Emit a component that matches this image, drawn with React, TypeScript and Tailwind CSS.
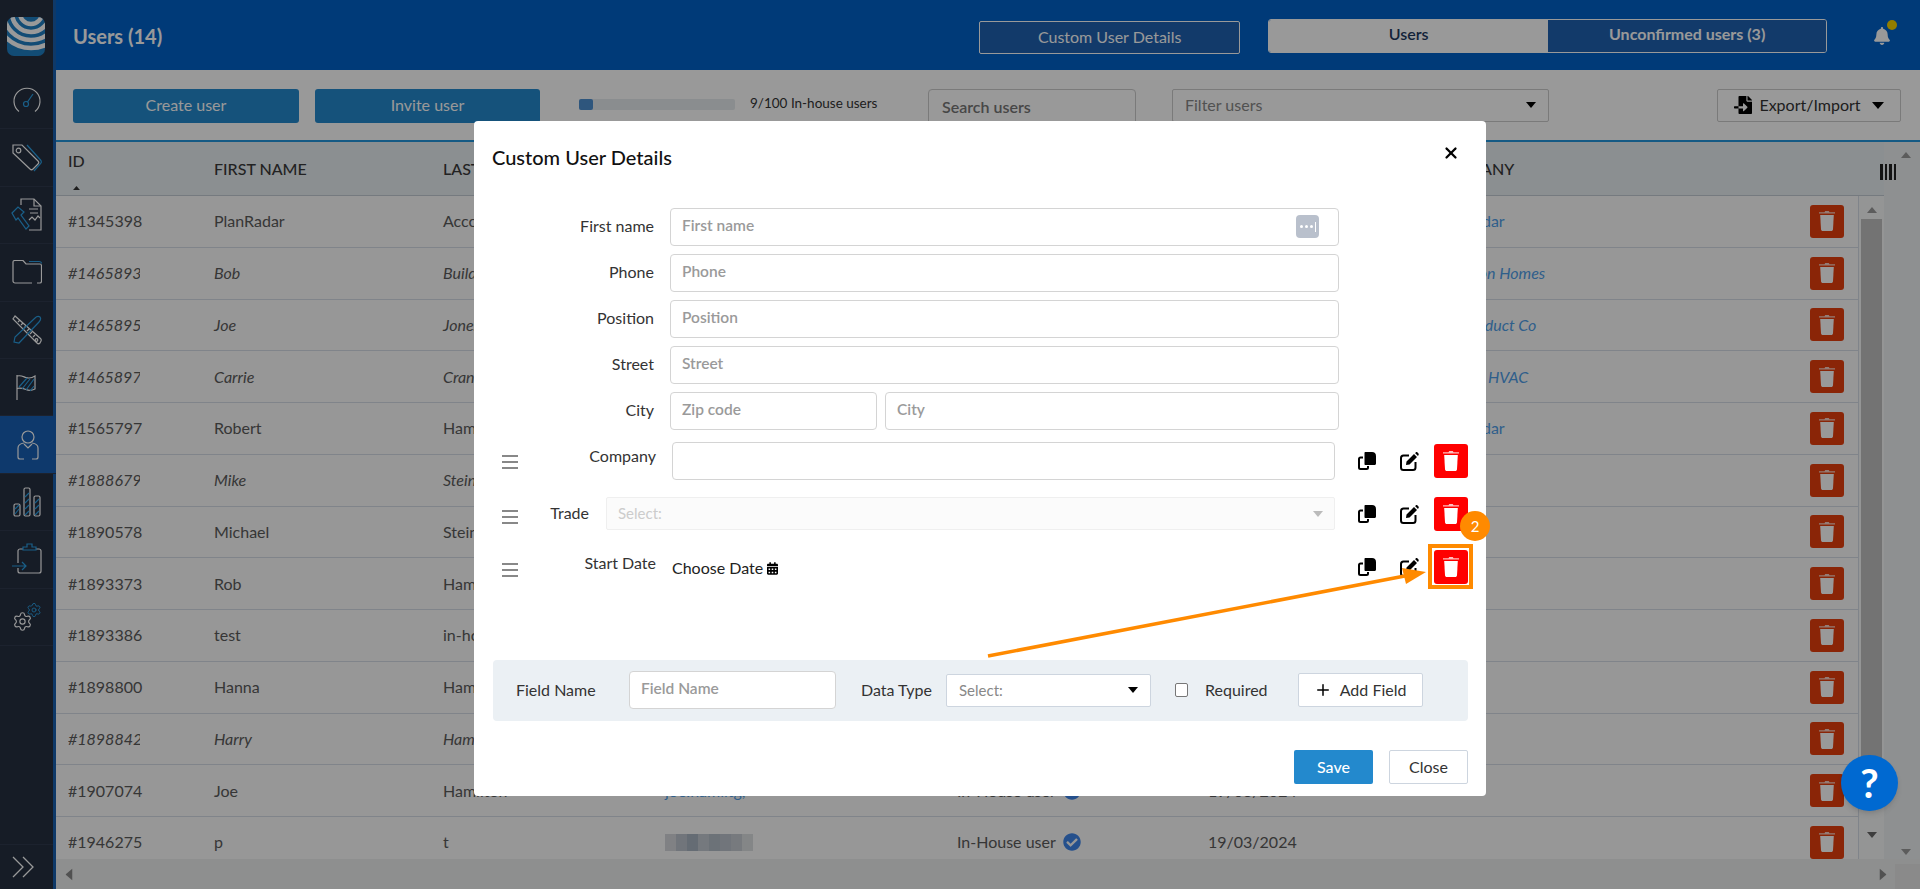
import { FC, ReactNode } from 'react';
import { Settings, Plus, X } from 'lucide-react';
import { FaBell, FaCalendarAlt, FaCheckCircle, FaFileImport } from 'react-icons/fa';

const users = [
  { id: '#1345398', first: 'PlanRadar', last: 'Accounts', company: 'PlanRadar', italic: false },
  { id: '#1465893', first: 'Bob', last: 'Builder', company: 'Hamilton Homes', italic: true },
  { id: '#1465895', first: 'Joe', last: 'Jones', company: 'Ace Product Co', italic: true },
  { id: '#1465897', first: 'Carrie', last: 'Crane', company: 'Cranely HVAC', italic: true },
  { id: '#1565797', first: 'Robert', last: 'Hamilton', company: 'PlanRadar', italic: false },
  { id: '#1888679', first: 'Mike', last: 'Stein', company: '', italic: true },
  { id: '#1890578', first: 'Michael', last: 'Stein', company: '', italic: false },
  { id: '#1893373', first: 'Rob', last: 'Hamilton', company: '', italic: false },
  { id: '#1893386', first: 'test', last: 'in-house', company: '', italic: false },
  { id: '#1898800', first: 'Hanna', last: 'Hamilton', company: '', italic: false },
  { id: '#1898842', first: 'Harry', last: 'Hamilton', company: '', italic: true },
  { id: '#1907074', first: 'Joe', last: 'Hamilton', company: '', italic: false },
  { id: '#1946275', first: 'p', last: 't', company: '', italic: false },
];

const blurCells = ['bg-[#d5d8dc]', 'bg-[#bcc4ce]', 'bg-[#a9b4c2]', 'bg-[#c4cad2]', 'bg-[#b5bec9]', 'bg-[#bcc4ce]', 'bg-[#c7ccd3]', 'bg-[#dcdfe2]'];

const Trash: FC = () => (
  <svg width="16" height="20" viewBox="0 0 16 20" fill="white">
    <path d="M5.5 1.2 6.2 0h3.6l.7 1.2H16v1.3H0V1.2z" opacity="0.75" />
    <path d="M1.2 4h13.6l-.8 14.2c-.1 1-.8 1.800-1.800 1.800H3.800c-1 0-1.700-.8-1.800-1.800z" />
  </svg>
);

const CopyIcon: FC = () => (
  <svg width="18" height="18" viewBox="0 0 18 18" fill="none">
    <path d="M5 5.500H2.500C1.600 5.500 1 6.100 1 7v8.500C1 16.400 1.600 17 2.500 17h6c.9 0 1.500-.6 1.500-1.500V14" stroke="black" strokeWidth="2" />
    <path d="M7.500 0H14c2.500 0 4 1.600 4 4v7.500c0 .9-.6 1.500-1.500 1.500h-9c-.6 0-1-.4-1-1V1c0-.6.4-1 1-1z" fill="black" />
  </svg>
);

const EditIcon: FC = () => (
  <svg width="19" height="19" viewBox="0 0 19 19" fill="none">
    <path d="M9 3.500H3.500C2.100 3.500 1 4.600 1 6v9.500C1 16.900 2.100 18 3.500 18H13c1.400 0 2.500-1.100 2.500-2.500V10" stroke="black" strokeWidth="2" />
    <path d="M6.500 9.500 14 2l3 3-7.500 7.500-3.500.5zM15 1l.8-.6c.5-.4 1.200-.4 1.700 0l1 1c.4.500.4 1.200 0 1.700L18 4z" fill="black" />
  </svg>
);

const Caret: FC<{ className?: string; color?: string; size?: 'sm' | 'lg' }> = ({ className, color = 'black', size = 'sm' }) => (
  <svg width={size === 'sm' ? 10 : 12} height={size === 'sm' ? 6 : 7} viewBox="0 0 12 7" className={className}>
    <path d="M0 0h12L6 7z" fill={color} />
  </svg>
);

const Logo: FC = () => (
  <svg width="38" height="39" viewBox="0 0 38 39">
    <defs>
      <clipPath id="logo-clip">
        <rect width="38" height="39" rx="7" />
      </clipPath>
    </defs>
    <g clipPath="url(#logo-clip)">
      <rect width="38" height="39" fill="#1f7fc4" />
      <g fill="none" stroke="white" strokeWidth="4.500">
        <circle cx="24" cy="-4" r="11" />
        <circle cx="24" cy="-4" r="19" />
        <circle cx="24" cy="-4" r="27" />
        <circle cx="24" cy="-4" r="35" />
      </g>
    </g>
  </svg>
);

const navIcons: ReactNode[] = [
  <svg key="gauge" width="30" height="28" viewBox="0 0 30 28" fill="none" stroke="white" strokeWidth="1.2">
    <path d="M7 25.500A13 13 0 1 1 23 25.500" />
    <circle cx="14" cy="18" r="2.500" stroke="#2b9fe4" />
    <path d="M15.500 16 21 8" stroke="#2b9fe4" />
  </svg>,
  <svg key="tag" width="30" height="28" viewBox="0 0 30 28" fill="none" stroke="white" strokeWidth="1.2">
    <path d="M1 1h9l16 16c1 1 1 2 0 3l-5 5c-1 1-2 1-3 0L1 9z" />
    <circle cx="6.500" cy="6.500" r="2.300" />
    <path d="M15 1 28.500 16c1.200 1.400 1 2.600 0 3.600L22 27" stroke="#2b9fe4" />
  </svg>,
  <svg key="doc" width="32" height="33" viewBox="0 0 32 33" fill="none" stroke="white" strokeWidth="1.2">
    <path d="M10 7V1h13l7 7v24H18" />
    <path d="M23 1v7h7M18 11h9M19 15h8" />
    <path d="M18 22l3-3 3 3 3-4 2 2" />
    <path d="M1 15l6-6 6 5-3 3 8 11-3 3-8-11-2 2z" stroke="#2b9fe4" />
  </svg>,
  <svg key="folder" width="30" height="24" viewBox="0 0 30 24" fill="none" stroke="white" strokeWidth="1.2">
    <path d="M20 23H3c-1 0-2-1-2-2V2c0-1 1-1.500 2-1.500h8l3 3.500h14c1 0 1.500 1 1.500 2v15c0 1-.5 2-1.500 2h-3" />
    <path d="M17 1.500h10c1.500 0 2.500 1 2.500 2" stroke="#2b9fe4" />
  </svg>,
  <svg key="ruler" width="30" height="30" viewBox="0 0 30 30" fill="none" stroke="white" strokeWidth="1.2">
    <path d="M3 1 1 4l24 24c1 1 2 1 3 0l1-2c.5-1 .5-1.500-.5-2.500z" />
    <path d="M6 7l2-2M9 10l2-2M12 13l2-2M15 16l2-2M18 19l2-2M21 22l2-2" />
    <circle cx="24.500" cy="25" r="1.300" />
    <path d="M2 27l1-5L23 3c1.500-1.500 3.500-2 5-1 1 1.500.5 3.500-1 5L7 28z" stroke="#2b9fe4" />
  </svg>,
  <svg key="flag" width="24" height="28" viewBox="0 0 24 28" fill="none" stroke="white" strokeWidth="1.2">
    <path d="M2 2v25" />
    <path d="M2 3c4-1 6 .5 9 1.500 3 1 6 .5 9-1.500v13c-3 1.500-6 2-9 .5-3-1-6-2-9-1" />
    <path d="M4 14 12 5M7 16l8-10M11 17l8-11M15 18l4-5" stroke="#2b9fe4" />
  </svg>,
  <svg key="user" width="22" height="30" viewBox="0 0 22 30" fill="none" stroke="white" strokeWidth="1.2">
    <circle cx="11" cy="7" r="6" />
    <path d="M7 13c-3 .5-6 2-6 5v9c0 1 1 2 2 2h4M15 13c3 .5 6 2 6 5v9c0 1-1 2-2 2h-4M7 14l4 4 4-4" />
  </svg>,
  <svg key="bars" width="30" height="30" viewBox="0 0 30 30" fill="none" stroke="white" strokeWidth="1.2">
    <rect x="2" y="17" width="6" height="12" rx="1.500" />
    <rect x="12" y="1" width="6" height="28" rx="1.500" />
    <rect x="22" y="9" width="6" height="20" rx="1.500" />
    <path d="M3 27l4-5M3 22l4-4M13 10l4-4M13 16l4-4M13 22l4-4M13 28l4-4M23 16l4-4M23 22l4-4M23 28l4-4" stroke="#2b9fe4" />
  </svg>,
  <svg key="clip" width="30" height="32" viewBox="0 0 30 32" fill="none" stroke="white" strokeWidth="1.2">
    <path d="M11 6H8c-1 0-2 1-2 2v12M6 25v3c0 1 1 2 2 2h19c1 0 2-1 2-2V8c0-1-1-2-2-2h-3" />
    <path d="M11 7V4h4V1h5v3h4v3z" stroke="#2b9fe4" />
    <path d="M0 23h14M10 19l4 4-4 4" stroke="#2b9fe4" />
  </svg>,
];

const Handle: FC = () => (
  <div className="flex w-[18px] flex-col gap-[4px] pt-[13px]">
    <div className="h-[2px] w-[16px] bg-[#888]"></div>
    <div className="h-[2px] w-[16px] bg-[#888]"></div>
    <div className="h-[2px] w-[16px] bg-[#888]"></div>
  </div>
);

const Actions: FC<{ top: string }> = ({ top }) => (
  <div className={`ml-[23px] flex ${top}`}>
    <div className="mt-[8px]"><CopyIcon /></div>
    <div className="ml-[24px] mt-[8px]"><EditIcon /></div>
    <button className="ml-[15px] flex h-[34px] w-[34px] items-center justify-center rounded-[3px] bg-[#ff0000]">
      <Trash />
    </button>
  </div>
);

const TextField: FC<{ placeholder: string; className?: string }> = ({ placeholder, className = 'w-[669px]' }) => (
  <input
    placeholder={placeholder}
    className={`${className} h-[38px] rounded-[4px] border border-[#d4d4d4] bg-white px-[11px] pb-[4px] text-[15.5px] font-semibold text-[#333] placeholder:text-[#9a9a9a]`}
  />
);

const FormRow: FC<{ label: string; children: ReactNode }> = ({ label, children }) => (
  <div className="flex h-[38px] items-center">
    <label className="w-[180px] pb-[2px] text-right text-[16px] text-[#333]">{label}</label>
    <div className="ml-[16px] flex gap-[8px]">{children}</div>
  </div>
);

const UserModal: FC = () => (
  <div className="absolute left-[474px] top-[121px] z-20 h-[675px] w-[1012px] rounded-[4px] bg-white font-['Lato',sans-serif]">
    <div className="flex h-[87px] items-start justify-between pl-[18px] pr-[26px] pt-[23px]">
      <h2 className="text-[20px] font-medium leading-[26px] text-[#111]">Custom User Details</h2>
      <X className="h-[18px] w-[18px] text-black" strokeWidth={3} />
    </div>

    <div className="flex flex-col gap-[8px]">
      <FormRow label="First name">
        <div className="relative">
          <TextField placeholder="First name" />
          <div className="absolute right-[20px] top-[7px] flex h-[23px] w-[23px] items-center justify-center gap-[2px] rounded-[4px] bg-[#b9c0cc]">
            <span className="h-[3px] w-[3px] rounded-full bg-white"></span>
            <span className="h-[3px] w-[3px] rounded-full bg-white"></span>
            <span className="h-[3px] w-[3px] rounded-full bg-white"></span>
            <span className="h-[10px] w-[1px] bg-white"></span>
          </div>
        </div>
      </FormRow>
      <FormRow label="Phone"><TextField placeholder="Phone" /></FormRow>
      <FormRow label="Position"><TextField placeholder="Position" /></FormRow>
      <FormRow label="Street"><TextField placeholder="Street" /></FormRow>
      <FormRow label="City">
        <TextField placeholder="Zip code" className="w-[207px]" />
        <TextField placeholder="City" className="w-[454px]" />
      </FormRow>
    </div>

    <div className="ml-[28px] mt-[12px] flex h-[38px]">
      <Handle />
      <div className="w-[136px] pt-[3px] text-right text-[16px] leading-[22px] text-[#333]">Company</div>
      <input className="ml-[16px] h-[38px] w-[663px] rounded-[4px] border border-[#d4d4d4] bg-white" />
      <Actions top="mt-[2px]" />
    </div>

    <div className="ml-[28px] mt-[17px] flex h-[33px]">
      <Handle />
      <div className="w-[69px] pt-[5px] text-right text-[16px] leading-[22px] text-[#333]">Trade</div>
      <div className="ml-[17px] flex h-[33px] w-[729px] items-center justify-between rounded-[2px] border border-[#efefef] bg-[#fbfbfb] pl-[11px] pr-[11px]">
        <span className="text-[15px] text-[#ccc]">Select:</span>
        <Caret color="#bbb" />
      </div>
      <Actions top="mt-0" />
    </div>

    <div className="ml-[28px] mt-[20px] flex h-[33px]">
      <Handle />
      <div className="w-[136px] pt-[2px] text-right text-[16px] leading-[22px] text-[#333]">Start Date</div>
      <div className="ml-[16px] flex h-[22px] w-[663px] items-center gap-[4px] pt-[14px] text-[16px] text-[#222]">
        Choose Date <FaCalendarAlt className="h-[13px] w-[11px] text-black" />
      </div>
      <Actions top="mt-0" />
    </div>

    <div className="ml-[19px] mt-[77px] flex h-[61px] w-[975px] items-center rounded-[4px] bg-[#ebf0f4] pb-[1px] pl-[23px] text-[16px] text-[#333]">
      <span className="w-[113px]">Field Name</span>
      <TextField placeholder="Field Name" className="w-[207px]" />
      <span className="ml-[25px] w-[85px]">Data Type</span>
      <div className="flex h-[33px] w-[205px] items-center justify-between rounded-[2px] border border-[#cdd5df] bg-white pl-[12px] pr-[12px]">
        <span className="text-[15px] text-[#888]">Select:</span>
        <Caret />
      </div>
      <span className="ml-[24px] h-[14px] w-[13px] rounded-[2px] border border-[#777] bg-white"></span>
      <span className="ml-[17px]">Required</span>
      <button className="ml-[30px] flex h-[34px] w-[125px] items-center justify-center gap-[8px] rounded-[2px] border border-[#cdd5df] bg-white text-[16px] text-[#333]">
        <Plus className="h-[18px] w-[18px] text-black" strokeWidth={2} /> Add Field
      </button>
    </div>

    <div className="mt-[29px] flex justify-end gap-[16px] pr-[18px]">
      <button className="h-[34px] w-[79px] rounded-[2px] bg-[#2389cd] text-[16px] font-medium text-white">Save</button>
      <button className="h-[34px] w-[79px] rounded-[2px] border border-[#cdd5df] bg-white text-[16px] text-[#333]">Close</button>
    </div>

    {/* annotation drawn on top of the screenshot */}
    <div className="absolute left-[954px] top-[423px] h-[45px] w-[45px] border-[4px] border-[#ff8a00]"></div>
    <div className="absolute left-[986px] top-[390px] flex h-[30px] w-[30px] items-center justify-center rounded-full bg-[#ff8a00] text-[15px] text-white">2</div>
    <svg className="pointer-events-none absolute left-[500px] top-[430px]" width="460" height="115" viewBox="0 0 460 115">
      <path d="M14 105 436 24" stroke="#ff8a00" strokeWidth="3.500" fill="none" />
      <path d="M452 21 428 17 432 33z" fill="#ff8a00" />
    </svg>
  </div>
);

const App: FC = () => {
  return (
    <div className="relative flex h-screen w-full overflow-hidden bg-white font-['Lato',sans-serif] text-[#5a5a5a]">
      <aside className="flex h-full w-[56px] shrink-0 flex-col border-r-[3px] border-[#1a5fae] bg-[#252f40]">
        <div className="h-[72px] pl-[7px] pt-[17px]"><Logo /></div>
        {navIcons.map((icon, i) => (
          <div
            key={i}
            className={`flex h-[57.4px] items-center justify-center border-b border-[#2f3a4d] ${i === 6 ? '-mr-[3px] bg-[#1860b4]' : ''}`}
          >
            {icon}
          </div>
        ))}
        <div className="relative flex h-[57.4px] items-center justify-center border-b border-[#2f3a4d]">
          <div className="relative h-[30px] w-[30px]">
            <Settings className="absolute bottom-0 left-0 h-[21px] w-[21px] text-white" strokeWidth={1.3} />
            <Settings className="absolute right-0 top-0 h-[16px] w-[16px] text-[#2b9fe4]" strokeWidth={1.4} />
          </div>
        </div>
        <div className="mt-auto flex h-[45px] items-center border-t border-[#2f3a4d] pl-[12px]">
          <svg width="22" height="22" viewBox="0 0 22 22" fill="none" stroke="white" strokeWidth="1.3">
            <path d="M1 1 11 11 1 21M11 1 21 11 11 21" />
          </svg>
        </div>
      </aside>

      <main className="flex min-w-0 flex-1 flex-col">
        <header className="flex h-[70px] shrink-0 items-start bg-[#0061c8]">
          <h1 className="ml-[17px] mt-[23px] text-[20px] font-bold leading-[26px] text-white">Users (14)</h1>
          <button className="ml-[817px] mt-[21px] h-[33px] w-[261px] rounded-[2px] border border-white bg-[#1e61b1] pb-[2px] text-[16px] text-white">Custom User Details</button>
          <div className="ml-[28px] mt-[19px] flex h-[34px] w-[559px] overflow-hidden rounded-[3px] border border-white text-[16px] font-medium leading-[28px]">
            <div className="w-[279px] bg-white text-center font-semibold text-[#1e3a5f]">Users</div>
            <div className="flex-1 bg-[#1e61b1] text-center font-bold text-white">Unconfirmed users (3)</div>
          </div>
          <div className="relative ml-[47px] mt-[27px]">
            <FaBell className="h-[18px] w-[16px] text-white" />
            <span className="absolute -right-[7px] -top-[7px] h-[10px] w-[10px] rounded-full bg-[#f3d000]"></span>
          </div>
        </header>

        <div className="flex h-[70px] shrink-0 items-start pl-[17px] pt-[19px]">
          <button className="h-[34px] w-[226px] rounded-[3px] bg-[#2389cd] pb-[2px] text-[16px] text-white">Create user</button>
          <button className="ml-[16px] h-[34px] w-[225px] rounded-[3px] bg-[#2389cd] pb-[2px] text-[16px] text-white">Invite user</button>
          <div className="ml-[39px] mt-[10px] h-[11px] w-[156px] rounded-[2px] bg-[#e6ebee]">
            <div className="h-[11px] w-[14px] rounded-[2px] bg-[#4e8fd0]"></div>
          </div>
          <span className="ml-[15px] mt-[6px] w-[127px] whitespace-nowrap text-[13.5px] leading-[16px] text-[#333]">9/100 In-house users</span>
          <input
            placeholder="Search users"
            className="ml-[51px] h-[38px] w-[208px] rounded-[4px] border border-[#ccc] bg-white px-[13px] pb-[3px] text-[16px] font-semibold placeholder:text-[#777]"
          />
          <div className="ml-[36px] flex h-[33px] w-[377px] items-center justify-between rounded-[2px] border border-[#ccc] pb-[2px] pl-[12px] pr-[12px] text-[16px] text-[#888]">
            Filter users
            <Caret />
          </div>
          <button className="ml-auto mr-[19px] flex h-[33px] w-[184px] items-center justify-center gap-[7px] rounded-[2px] border border-[#ccc] bg-white pb-[1px] text-[16px] text-[#333]">
            <FaFileImport className="h-[18px] w-[18px] text-black" />
            Export/Import
            <Caret size="lg" className="ml-[4px]" />
          </button>
        </div>

        <div className="flex min-h-0 flex-1 flex-col border-t-2 border-[#2396dd]">
          <div className="flex min-h-0 flex-1">
            <div className="flex min-w-0 flex-1 flex-col">
              <div className="relative grid h-[54px] shrink-0 grid-cols-[146px_229px_222px_292px_251px_226px_1fr] border-b border-[#c4ccd4] bg-[#e8eef2] pl-[12px] text-[16px] font-medium text-[#3a3a3a]">
                <div className="pt-[9px] leading-[20px]">
                  ID
                  <Caret className="ml-[5px] mt-[15px] h-[4px] w-[7px] rotate-180" color="#333" />
                </div>
                <div className="pt-[17px] leading-[20px]">FIRST NAME</div>
                <div className="pt-[17px] leading-[20px]">LAST NAME</div>
                <div className="pt-[17px] leading-[20px]">EMAIL</div>
                <div className="pt-[17px] leading-[20px]">USER TYPE</div>
                <div className="pt-[17px] leading-[20px]">CREATED</div>
                <div className="pt-[17px] leading-[20px]">COMPANY</div>
              </div>

              <div className="flex min-h-0 flex-1">
                <div className="min-w-0 flex-1 overflow-hidden">
                  {users.map((u, i) => (
                    <div
                      key={u.id}
                      className={`grid h-[51.75px] grid-cols-[146px_229px_222px_292px_251px_226px_1fr] items-center border-b border-[#d6dde6] bg-[#fcfcfc] pl-[12px] pr-[14px] text-[16px] ${u.italic ? 'italic' : ''}`}
                    >
                      <div className={`overflow-hidden whitespace-nowrap ${u.italic ? 'w-[72px]' : 'w-[76px]'}`}>{u.id}</div>
                      <div>{u.first}</div>
                      <div>{u.last}</div>
                      {i === users.length - 1 ? (
                        <div className="flex h-[17px] w-[88px]">
                          {blurCells.map((c, j) => (
                            <div key={j} className={`flex-1 ${c}`}></div>
                          ))}
                        </div>
                      ) : (
                        <div className="text-[#4f9ee8]">joe.hamiltg,</div>
                      )}
                      <div className="flex items-center gap-[7px]">
                        In-House user
                        <FaCheckCircle className="h-[18px] w-[18px] text-[#3f86ea]" />
                      </div>
                      <div>19/03/2024</div>
                      <div className="flex items-center justify-between">
                        <span className="text-[#4f9ee8]">{u.company}</span>
                        <button className="flex h-[33px] w-[34px] items-center justify-center rounded-[3px] bg-[#e63f0d]">
                          <Trash />
                        </button>
                      </div>
                    </div>
                  ))}
                </div>
                <div className="flex w-[26px] shrink-0 flex-col items-center border-l border-[#d6dde6] bg-[#f7f8f9] pt-[11px]">
                  <Caret className="rotate-180" color="#999" />
                  <div className="mt-[6px] h-[580px] w-[21px] shrink-0 bg-[#c0c0c0]"></div>
                  <Caret className="mt-[33px]" color="#666" />
                </div>
              </div>
            </div>

            <div className="relative w-[36px] shrink-0 bg-[#edf0f2]">
              <Caret className="absolute left-[17px] top-[10px] rotate-180" color="#999" />
              <div className="absolute -left-[4px] top-[22px] flex h-[16px] gap-[2px]">
                <span className="h-full w-[2.5px] bg-[#222]"></span>
                <span className="h-full w-[2.5px] bg-[#222]"></span>
                <span className="h-full w-[2.5px] bg-[#222]"></span>
                <span className="h-full w-[2.5px] bg-[#222]"></span>
              </div>
              <Caret className="absolute bottom-[4px] left-[17px]" color="#999" />
            </div>
          </div>

          <div className="flex h-[30px] shrink-0 bg-[#edeeee]">
            <div className="flex flex-1 items-center justify-between pl-[7px] pr-[6px]">
              <Caret size="lg" className="rotate-90" color="#888" />
              <Caret size="lg" className="-rotate-90" color="#888" />
            </div>
            <div className="mt-[5px] h-[25px] w-[25px] bg-[#e6e6e6]"></div>
          </div>
        </div>
      </main>

      <div className="absolute inset-0 z-10 bg-black/40"></div>
      <UserModal />

      <button className="absolute bottom-[78px] right-[22px] z-30 flex h-[56px] w-[57px] items-center justify-center rounded-full bg-[#0069d1] text-[40px] font-bold leading-none text-white shadow-md">
        ?
      </button>
    </div>
  );
};

export default App;
